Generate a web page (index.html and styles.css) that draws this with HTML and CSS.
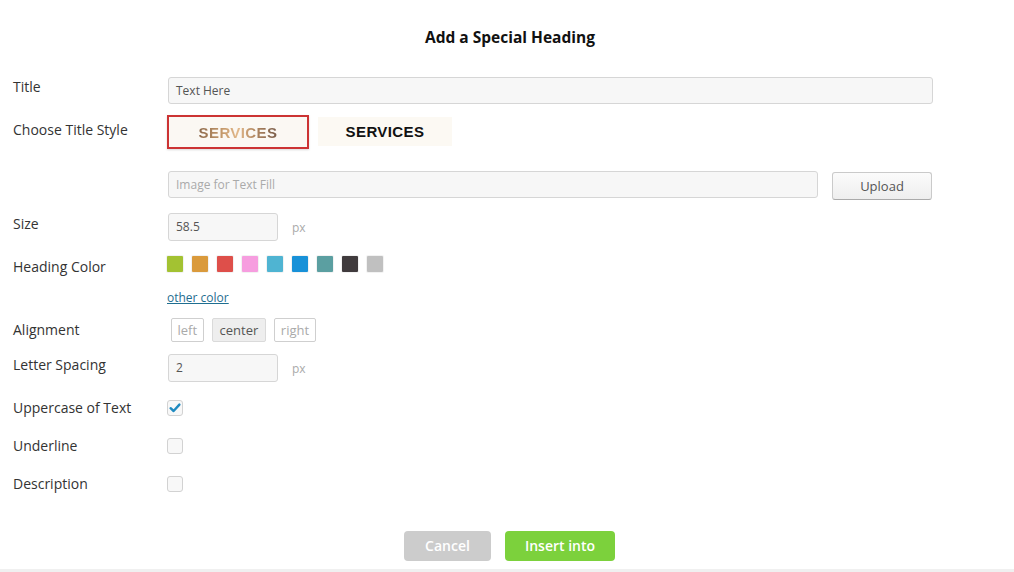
FILE: index.html
```html
<!DOCTYPE html>
<html>
<head>
<meta charset="utf-8">
<link rel="stylesheet" href="styles.css">
</head>
<body>
<div class="dialog">
  <h1 class="head">Add a Special Heading</h1>
  <div class="form">
    <div class="row r-title">
      <div class="label">Title</div>
      <div class="field"><div class="input wide">Text Here</div></div>
    </div>
    <div class="row r-style">
      <div class="label lp5">Choose Title Style</div>
      <div class="field styles">
        <div class="style-opt selected"><span class="grad">SERVICES</span></div>
        <div class="style-opt plain"><span>SERVICES</span></div>
      </div>
    </div>
    <div class="row r-image">
      <div class="label"></div>
      <div class="field image-row">
        <div class="input image placeholder">Image for Text Fill</div>
        <div class="btn-upload">Upload</div>
      </div>
    </div>
    <div class="row r-size">
      <div class="label lp1">Size</div>
      <div class="field unit-row">
        <div class="input small">58.5</div>
        <span class="unit">px</span>
      </div>
    </div>
    <div class="row r-color">
      <div class="label lp1">Heading Color</div>
      <div class="field">
        <div class="swatches">
          <span class="sw" style="background:#a3c232"></span>
          <span class="sw" style="background:#da9a3c"></span>
          <span class="sw" style="background:#de4f4a"></span>
          <span class="sw" style="background:#f69ddf"></span>
          <span class="sw" style="background:#4fb4d2"></span>
          <span class="sw" style="background:#1891d8"></span>
          <span class="sw" style="background:#5b9fa1"></span>
          <span class="sw" style="background:#403b3d"></span>
          <span class="sw" style="background:#c0c0c0"></span>
        </div>
        <a class="other">other color</a>
      </div>
    </div>
    <div class="row r-align">
      <div class="label lp2">Alignment</div>
      <div class="field aligns">
        <span class="al">left</span>
        <span class="al active">center</span>
        <span class="al">right</span>
      </div>
    </div>
    <div class="row r-spacing">
      <div class="label lp1">Letter Spacing</div>
      <div class="field unit-row">
        <div class="input small">2</div>
        <span class="unit">px</span>
      </div>
    </div>
    <div class="row r-check r-upper">
      <div class="label">Uppercase of Text</div>
      <div class="field"><span class="cb checked"><svg viewBox="0 0 16 16" width="16" height="16"><path d="M3.6 8.2 L6.6 11 L12.4 4.6" fill="none" stroke="#1f8ac0" stroke-width="2.4" stroke-linecap="round" stroke-linejoin="round"/></svg></span></div>
    </div>
    <div class="row r-check">
      <div class="label">Underline</div>
      <div class="field"><span class="cb"></span></div>
    </div>
    <div class="row r-check">
      <div class="label">Description</div>
      <div class="field"><span class="cb"></span></div>
    </div>
  </div>
  <div class="actions">
    <span class="btn cancel">Cancel</span>
    <span class="btn insert">Insert into</span>
  </div>
</div>
<div class="bottom-bar"></div>
</body>
</html>
```
FILE: styles.css
```css
* { box-sizing: border-box; }
html, body { margin: 0; padding: 0; background: #fff; }
body {
  font-family: "Open Sans", "Liberation Sans", sans-serif;
  color: #333;
  width: 1014px;
  height: 572px;
  overflow: hidden;
  position: relative;
}
.dialog { padding: 0 13px; }
.head {
  margin: 0;
  padding-top: 26px;
  height: 77px;
  font-size: 15.5px;
  line-height: 22px;
  font-weight: 700;
  text-align: center;
  color: #111;
  padding-left: 6px;
}
.form { display: flex; flex-direction: column; }
.row { display: grid; grid-template-columns: 155px 1fr; align-items: start; }
.label { font-size: 14px; line-height: 20px; color: #333; }
.lp1 { padding-top: 1px; }
.lp2 { padding-top: 2px; }
.lp5 { padding-top: 5px; }
.field { display: flex; }
.input {
  height: 27px;
  border: 1px solid #d6d6d6;
  border-radius: 3px;
  background: #f7f7f7;
  font-size: 12px;
  line-height: 25px;
  padding: 0 7px;
  color: #555;
}
.input.wide { width: 765px; }
.placeholder { color: #aaa; }
.r-style { margin-top: 11px; }
.styles { gap: 9px; align-items: flex-start; }
.style-opt {
  display: flex;
  align-items: center;
  justify-content: center;
  font-family: "Liberation Sans", Arial, sans-serif;
  font-weight: 700;
  font-size: 15px;
  letter-spacing: 0.4px;
}
.style-opt.selected {
  width: 142px;
  height: 34px;
  margin-left: -1px;
  border: 2px solid #cc3333;
  background: #fbf8f3;
  box-shadow: 0 1px 2px rgba(0,0,0,0.15);
}
.grad {
  background: linear-gradient(90deg, #8e6a4c 0%, #c59a6c 30%, #e2b88a 50%, #b58a62 70%, #7a5d4a 100%);
  -webkit-background-clip: text;
  background-clip: text;
  color: transparent;
  padding-top: 1px;
}
.style-opt.plain {
  width: 134px;
  height: 29px;
  margin-top: 2px;
  background: #fcf9f3;
  color: #111;
}
.r-image { margin-top: 22px; }
.image-row { gap: 14px; align-items: flex-start; }
.input.image { width: 650px; }
.btn-upload {
  width: 100px;
  height: 28px;
  margin-top: 1px;
  border: 1px solid #cacaca;
  border-bottom-color: #aaa;
  border-radius: 3px;
  background: linear-gradient(#fbfbfb, #eeeeee);
  font-size: 13px;
  line-height: 26px;
  text-align: center;
  color: #555;
}
.r-size { margin-top: 13px; }
.unit-row { align-items: center; gap: 14px; }
.input.small { width: 110px; height: 28px; line-height: 26px; }
.unit { font-size: 12px; color: #aaa; }
.r-color { margin-top: 15px; }
.r-color .field { flex-direction: column; align-items: flex-start; }
.swatches { display: flex; gap: 9px; margin-left: -1px; }
.sw {
  width: 16px;
  height: 16px;
  border-radius: 1px;
  box-shadow: 0 0 0 1px rgba(0,0,0,0.05);
}
.other {
  margin-top: 17px;
  margin-left: -1px;
  font-size: 12px;
  line-height: 17px;
  color: #1f6e90;
  text-decoration: underline;
}
.r-align { margin-top: 12px; }
.aligns { gap: 8px; margin-left: 3px; }
.al {
  height: 24px;
  border: 1px solid #cfcfcf;
  border-radius: 2px;
  padding: 0 5.5px;
  font-size: 13px;
  line-height: 22px;
  color: #aaa;
  background: #fff;
}
.al.active { background: #eeeeee; border-color: #dadada; color: #555; padding: 0 7px; }
.r-spacing { margin-top: 12px; }
.r-check { margin-top: 18px; }
.r-upper { margin-top: 16px; }
.r-check .field { padding-top: 2px; }
.cb {
  width: 16px;
  height: 16px;
  margin-left: -1px;
  border: 1px solid #d2d2d2;
  border-radius: 3px;
  background: #f8f8f8;
  display: inline-flex;
  align-items: center;
  justify-content: center;
}
.cb svg { display: block; margin: -1px; }
.actions {
  margin-top: 37px;
  display: flex;
  justify-content: center;
  gap: 14px;
  padding-left: 5px;
}
.btn {
  height: 30px;
  border-radius: 4px;
  color: #fff;
  font-size: 14px;
  font-weight: 600;
  line-height: 30px;
  text-align: center;
}
.cancel { width: 87px; background: #cccccc; }
.insert { width: 110px; background: #7cd13c; }
.bottom-bar {
  position: absolute;
  left: 0;
  right: 0;
  bottom: 0;
  height: 3px;
  background: #f0f0f0;
}
```
